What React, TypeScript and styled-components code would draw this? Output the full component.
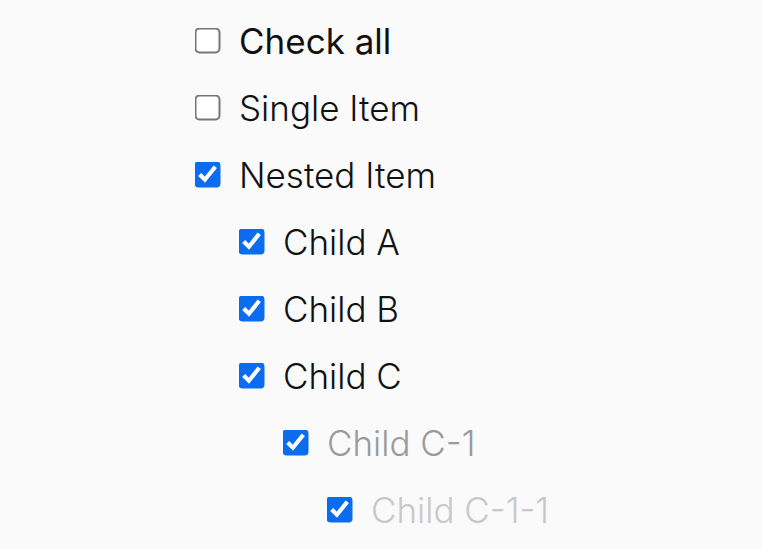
import styled, { createGlobalStyle } from "styled-components";

const GlobalStyle = createGlobalStyle`
  body {
    margin: 0;
    background: #fafafa;
    font-family: Inter, "Noto Sans", sans-serif;
  }
`;

const List = styled.ul`
  list-style: none;
  margin: 0;
  padding: 7px 0 0 194px;
  display: flex;
  flex-direction: column;
`;

const Row = styled.li<{ $level: number }>`
  display: flex;
  align-items: center;
  gap: 19px;
  height: 67px;
  padding-left: ${(p) => p.$level * 44}px;
`;

const Box = styled.input`
  width: 13px;
  height: 13px;
  margin: 6.5px;
  transform: scale(2);
  accent-color: #0b6cf0;
  flex-shrink: 0;
`;

const Label = styled.label<{ $tone: "strong" | "normal" | "muted" | "faint" }>`
  font-size: 35px;
  font-weight: ${(p) => (p.$tone === "strong" ? 400 : 300)};
  color: ${(p) =>
    p.$tone === "muted" ? "#9a9a9a" : p.$tone === "faint" ? "#c8c8c8" : "#111"};
`;

type Item = {
  id: string;
  text: string;
  level: number;
  checked: boolean;
  tone: "strong" | "normal" | "muted" | "faint";
};

const items: Item[] = [
  { id: "all", text: "Check all", level: 0, checked: false, tone: "strong" },
  { id: "single", text: "Single Item", level: 0, checked: false, tone: "normal" },
  { id: "nested", text: "Nested Item", level: 0, checked: true, tone: "normal" },
  { id: "a", text: "Child A", level: 1, checked: true, tone: "normal" },
  { id: "b", text: "Child B", level: 1, checked: true, tone: "normal" },
  { id: "c", text: "Child C", level: 1, checked: true, tone: "normal" },
  { id: "c1", text: "Child C-1", level: 2, checked: true, tone: "muted" },
  { id: "c11", text: "Child C-1-1", level: 3, checked: true, tone: "faint" },
];

export default function App() {
  return (
    <>
      <GlobalStyle />
      <List>
        {items.map((item) => (
          <Row key={item.id} $level={item.level}>
            <Box type="checkbox" id={item.id} defaultChecked={item.checked} />
            <Label htmlFor={item.id} $tone={item.tone}>
              {item.text}
            </Label>
          </Row>
        ))}
      </List>
    </>
  );
}
